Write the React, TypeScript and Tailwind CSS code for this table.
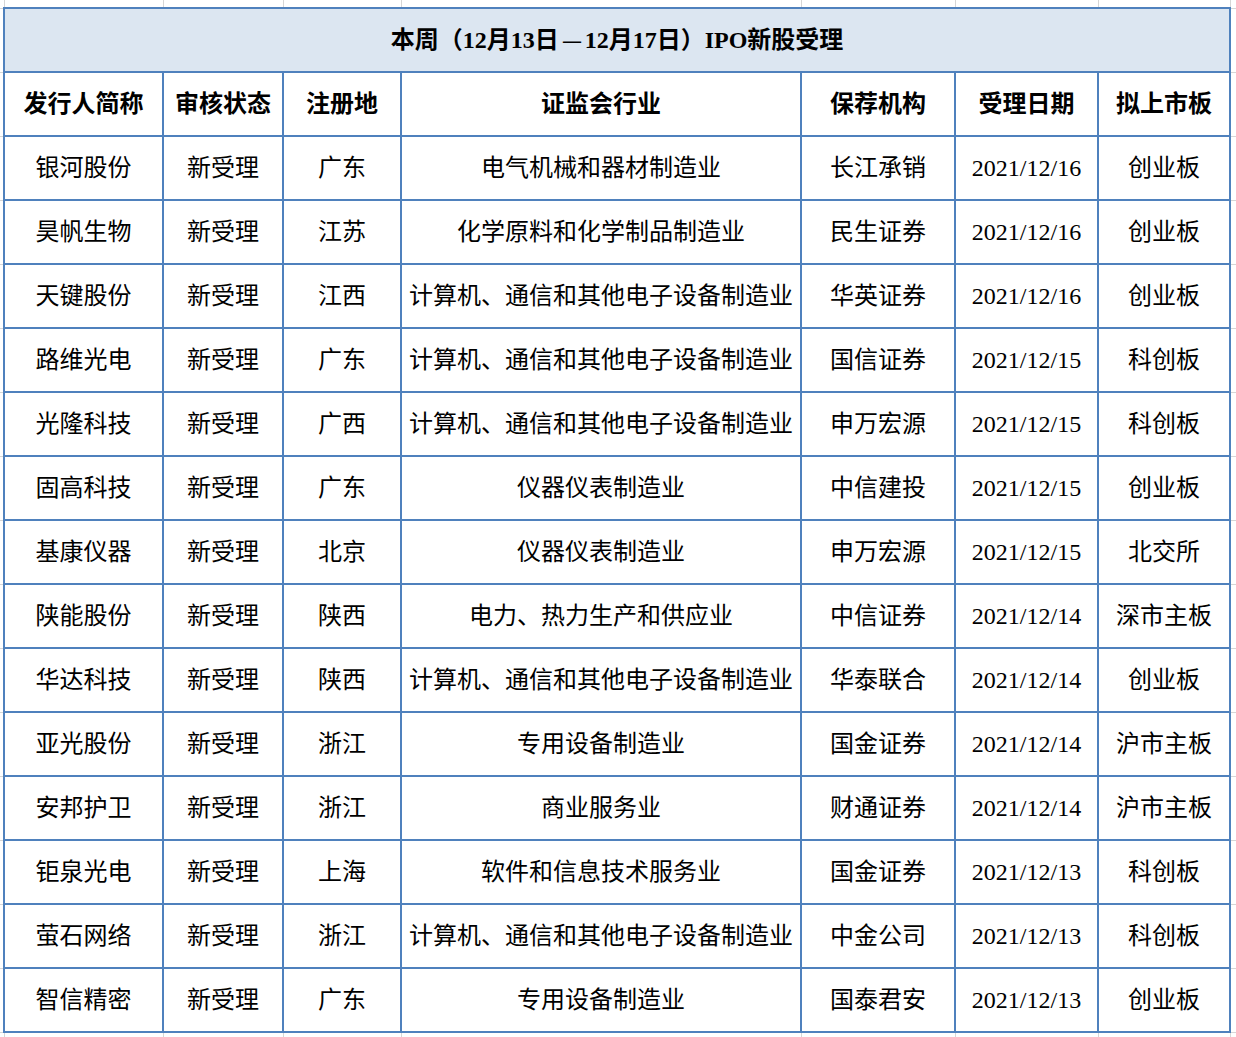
import React from "react";

const rows: string[][] = [
  ["银河股份", "新受理", "广东", "电气机械和器材制造业", "长江承销", "2021/12/16", "创业板"],
  ["昊帆生物", "新受理", "江苏", "化学原料和化学制品制造业", "民生证券", "2021/12/16", "创业板"],
  ["天键股份", "新受理", "江西", "计算机、通信和其他电子设备制造业", "华英证券", "2021/12/16", "创业板"],
  ["路维光电", "新受理", "广东", "计算机、通信和其他电子设备制造业", "国信证券", "2021/12/15", "科创板"],
  ["光隆科技", "新受理", "广西", "计算机、通信和其他电子设备制造业", "申万宏源", "2021/12/15", "科创板"],
  ["固高科技", "新受理", "广东", "仪器仪表制造业", "中信建投", "2021/12/15", "创业板"],
  ["基康仪器", "新受理", "北京", "仪器仪表制造业", "申万宏源", "2021/12/15", "北交所"],
  ["陕能股份", "新受理", "陕西", "电力、热力生产和供应业", "中信证券", "2021/12/14", "深市主板"],
  ["华达科技", "新受理", "陕西", "计算机、通信和其他电子设备制造业", "华泰联合", "2021/12/14", "创业板"],
  ["亚光股份", "新受理", "浙江", "专用设备制造业", "国金证券", "2021/12/14", "沪市主板"],
  ["安邦护卫", "新受理", "浙江", "商业服务业", "财通证券", "2021/12/14", "沪市主板"],
  ["钜泉光电", "新受理", "上海", "软件和信息技术服务业", "国金证券", "2021/12/13", "科创板"],
  ["萤石网络", "新受理", "浙江", "计算机、通信和其他电子设备制造业", "中金公司", "2021/12/13", "科创板"],
  ["智信精密", "新受理", "广东", "专用设备制造业", "国泰君安", "2021/12/13", "创业板"],
];

const headers = ["发行人简称", "审核状态", "注册地", "证监会行业", "保荐机构", "受理日期", "拟上市板"];

const blue = "border-2 border-[#4f81bd] text-center align-middle p-0 whitespace-nowrap";
const grayL = "border border-[#d6d6d6] border-l-0 p-0";
const grayR = "border border-[#d6d6d6] border-r-0 p-0";
const grayT = "border border-[#d6d6d6] border-t-0 p-0";
const grayB = "border border-[#d6d6d6] border-b-0 p-0";

export default function App() {
  return (
    <div
      className="w-[1236px] h-[1037px] overflow-hidden bg-white text-black"
      style={{ fontFamily: '"Liberation Serif", "Noto Sans CJK SC", serif' }}
    >
      <table className="table-fixed border-collapse w-[1236px] text-[24px] leading-none">
        <colgroup>
          <col className="w-[4px]" />
          <col className="w-[159px]" />
          <col className="w-[120px]" />
          <col className="w-[118px]" />
          <col className="w-[400px]" />
          <col className="w-[154px]" />
          <col className="w-[143px]" />
          <col className="w-[132px]" />
          <col className="w-[6px]" />
        </colgroup>
        <tbody>
          <tr className="h-[8px]">
            <td className={grayT + " border-l-0"} />
            {headers.map((_, i) => (
              <td key={i} className={grayT} />
            ))}
            <td className={grayT + " border-r-0"} />
          </tr>
          <tr className="h-[64px]">
            <td className={grayL} />
            <td colSpan={7} className={blue + " bg-[#dce6f1] font-bold"}>
              本周（12月13日<span className="inline-block scale-x-75 px-[1px]">—</span>12月17日）IPO新股受理
            </td>
            <td className={grayR} />
          </tr>
          <tr className="h-[64px]">
            <td className={grayL} />
            {headers.map((h) => (
              <td key={h} className={blue + " font-bold"}>
                {h}
              </td>
            ))}
            <td className={grayR} />
          </tr>
          {rows.map((r, ri) => (
            <tr key={ri} className="h-[64px]">
              <td className={grayL} />
              {r.map((c, ci) => (
                <td key={ci} className={blue}>
                  {c}
                </td>
              ))}
              <td className={grayR} />
            </tr>
          ))}
          <tr className="h-[8px]">
            <td className={grayB + " border-l-0"} />
            {headers.map((_, i) => (
              <td key={i} className={grayB} />
            ))}
            <td className={grayB + " border-r-0"} />
          </tr>
        </tbody>
      </table>
    </div>
  );
}
